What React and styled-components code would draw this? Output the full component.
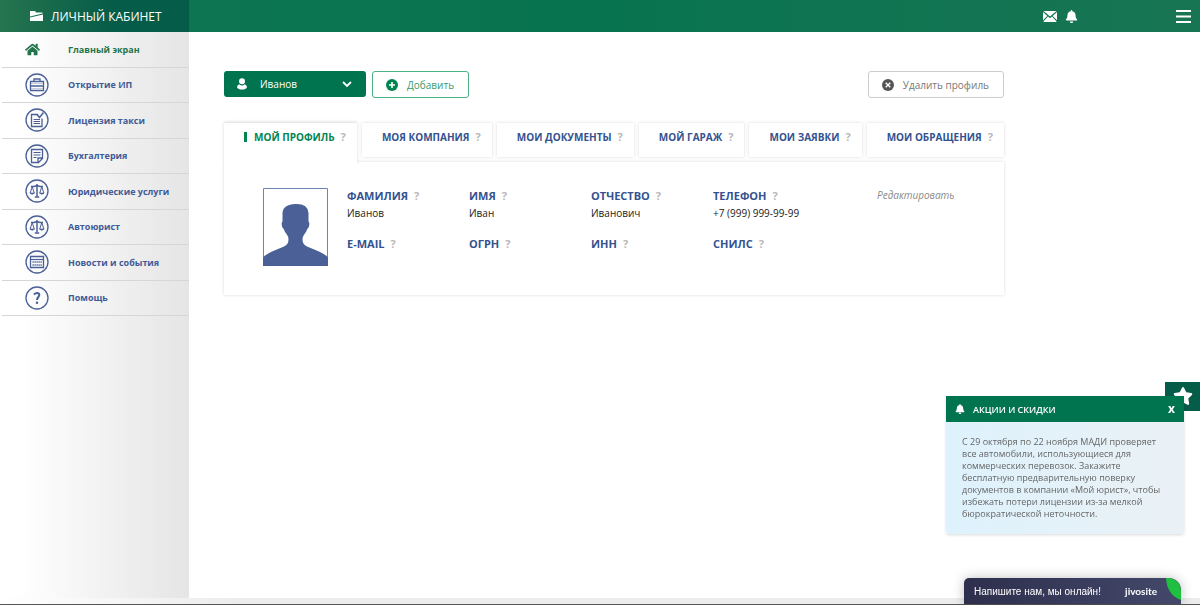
import React, { useState } from "react";
import styled, { createGlobalStyle } from "styled-components";
import { FaHome, FaStar, FaBell } from "react-icons/fa";

function App() {
  const [activeTab, setActiveTab] = useState(1);
  const [noticeOpen, setNoticeOpen] = useState(true);

  return (
    <Page>
      <GlobalStyle />
      <Header>
        <Brand href="#">
          <FolderIcon />
          ЛИЧНЫЙ КАБИНЕТ
        </Brand>
        <HeaderActions>
          <IconButton aria-label="Сообщения">
            <MailIcon />
          </IconButton>
          <IconButton aria-label="Уведомления">
            <FaBell size={13} />
          </IconButton>
        </HeaderActions>
        <IconButton aria-label="Меню">
          <MenuIcon />
        </IconButton>
      </Header>
      <Body>
        <Sidebar>
          <MenuList>
            {MENU_ITEMS.map(item => (
              <MenuItem key={item.id}>
                <MenuLink href="#" $active={item.id === 1}>
                  <MenuIconCell>{item.icon}</MenuIconCell>
                  {item.text}
                </MenuLink>
              </MenuItem>
            ))}
          </MenuList>
        </Sidebar>
        <Main>
          <Content>
            <Toolbar>
              <ProfileSelect>
                <UserIcon />
                <select aria-label="Профиль">
                  <option>Иванов</option>
                </select>
                <ChevronIcon />
              </ProfileSelect>
              <OutlineButton $color="#3a9a6c" $border="#4bb285">
                <AddIcon />
                Добавить
              </OutlineButton>
              <Spacer />
              <OutlineButton $color="#777777" $border="#cccccc">
                <RemoveIcon />
                Удалить профиль
              </OutlineButton>
            </Toolbar>
            <Tabs>
              {TABS.map(tab => (
                <Tab
                  key={tab.id}
                  $active={tab.id === activeTab}
                  onClick={() => setActiveTab(tab.id)}
                >
                  {tab.text}
                  <Hint>?</Hint>
                </Tab>
              ))}
            </Tabs>
            <ProfileCard>
              <Avatar />
              <FieldList>
                {FIELDS.map(field => (
                  <Field key={field.id}>
                    <FieldName>
                      {field.name}
                      <Hint>?</Hint>
                    </FieldName>
                    <FieldValue>{field.value}</FieldValue>
                  </Field>
                ))}
              </FieldList>
              <EditLink href="#">Редактировать</EditLink>
            </ProfileCard>
          </Content>
        </Main>
      </Body>
      <BottomStrip />
      <StarButton aria-label="Акции" onClick={() => setNoticeOpen(true)}>
        <FaStar size={20} />
      </StarButton>
      {noticeOpen && (
        <Notice>
          <NoticeHeader>
            <FaBell size={10} />
            <NoticeTitle>АКЦИИ И СКИДКИ</NoticeTitle>
            <CloseButton onClick={() => setNoticeOpen(false)}>x</CloseButton>
          </NoticeHeader>
          <NoticeText>
            С 29 октября по 22 ноября МАДИ проверяет все автомобили,
            использующиеся для коммерческих перевозок. Закажите бесплатную
            предварительную поверку документов в компании «Мой юрист», чтобы
            избежать потери лицензии из-за мелкой бюрократической неточности.
          </NoticeText>
        </Notice>
      )}
      <Chat>
        Напишите нам, мы онлайн!
        <ChatLogo>jivosite</ChatLogo>
        <LeafIcon />
      </Chat>
    </Page>
  );
}

const FolderIcon = () => (
  <svg width="13" height="12" viewBox="0 0 13 12" fill="#fff">
    <path d="M0 1h5l1 1.500h6.500v1L0 6.500z" />
    <path d="M0 7.500l13-3V11H0z" />
  </svg>
);

const MailIcon = () => (
  <svg width="14" height="11" viewBox="0 0 14 11" fill="#fff">
    <path d="M.5 0h13L7 5.500z" />
    <path d="M0 1l4.300 3.900L0 9.300zM14 1L9.700 4.900 14 9.300z" />
    <path d="M5 5.600l2 1.600 2-1.600L13.600 10.500a1 1 0 0 1-.6.500H1a1 1 0 0 1-.6-.5z" />
  </svg>
);

const MenuIcon = () => (
  <svg width="15" height="13" viewBox="0 0 15 13" fill="#fff">
    <path d="M0 0h15v2H0zM0 5.500h15v2H0zM0 11h15v2H0z" />
  </svg>
);

const UserIcon = () => (
  <svg width="10" height="12" viewBox="0 0 10 12" fill="#fff">
    <circle cx="5" cy="3.200" r="3" />
    <path d="M2.200 6.200Q5 8.600 7.800 6.200 10 7 10 9.200 9 11.500 5 11.500T0 9.200Q0 7 2.200 6.200z" />
  </svg>
);

const ChevronIcon = () => (
  <svg width="10" height="7" viewBox="0 0 10 7" fill="none">
    <path d="M1 1l4 4 4-4" stroke="#fff" strokeWidth="1.800" />
  </svg>
);

const AddIcon = () => (
  <svg width="12" height="12" viewBox="0 0 12 12">
    <circle cx="6" cy="6" r="6" fill="#008552" />
    <path d="M6 3v6M3 6h6" stroke="#fff" strokeWidth="1.600" />
  </svg>
);

const RemoveIcon = () => (
  <svg width="12" height="12" viewBox="0 0 12 12">
    <circle cx="6" cy="6" r="6" fill="#555" />
    <path d="M3.700 3.700l4.600 4.600M8.300 3.700L3.700 8.300" stroke="#fff" strokeWidth="1.400" />
  </svg>
);

const CircleIcon = ({ children }) => (
  <svg width="24" height="24" viewBox="0 0 24 24" fill="none" stroke="#4a6096">
    <circle cx="12" cy="12" r="11" strokeWidth="1.300" />
    {children}
  </svg>
);

const CaseIcon = () => (
  <CircleIcon>
    <path d="M5.500 8.500h13v9h-13zM9 8.500v-2.500h6v2.500M5.500 13h13" strokeWidth="1.300" />
    <path d="M6 10.500h12M6 15.500h12" strokeWidth=".3" />
  </CircleIcon>
);

const LicenceIcon = () => (
  <CircleIcon>
    <path d="M13 6.500H6.500v12h10.500v-8" strokeWidth="1.300" />
    <path d="M12 6.500l2.500 3L18.500 4.500" strokeWidth="1.500" />
    <path d="M8.500 11.500h6.500M8.500 13.500h6.500M8.500 15.500h6.500" />
  </CircleIcon>
);

const ReportIcon = () => (
  <CircleIcon>
    <path d="M6.500 5.500h11v9l-4 4h-7zM13 18v-4h4.500" strokeWidth="1.300" />
    <path d="M8.500 8.500h7M8.500 11h7M8.500 13.500h3" strokeWidth="1.200" />
  </CircleIcon>
);

const ScalesIcon = () => (
  <CircleIcon>
    <path d="M12 5v12.500M6 7.500h3l3-1 3 1h3" strokeWidth="1.500" />
    <path d="M9.800 18h4.400" strokeWidth="1.500" />
    <path d="M7.200 7.500L5.200 14M7.200 7.500l2 6.500M16.800 7.500l-2 6.500M16.800 7.500l2 6.500" />
    <path d="M4.800 14h4.800q-2.400 2.600-4.800 0zM14.400 14h4.800q-2.400 2.600-4.800 0z" fill="#4a6096" strokeWidth=".6" />
  </CircleIcon>
);

const CalendarIcon = () => (
  <CircleIcon>
    <path d="M5.500 6.500h13v11h-13z" strokeWidth="1.300" />
    <path d="M5.500 9.500h13" strokeWidth="1.200" />
    <path d="M7.500 12h9.500M7.500 15h9.500" strokeWidth="1.300" strokeDasharray="1.300 .7" />
  </CircleIcon>
);

const HelpIcon = () => (
  <CircleIcon>
    <path d="M8.900 8.400Q12 5.900 14 7.700C15.800 10 12 10.800 12 14" strokeWidth="2" />
    <circle cx="12" cy="16.700" r=".7" fill="#4a6096" strokeWidth="1.100" />
  </CircleIcon>
);

const Avatar = () => (
  <svg width="65" height="78" viewBox="0 0 65 78">
    <path d="M.5.500h64v77H.5z" fill="#fff" stroke="#6f84b6" />
    <path
      d="M0 78V69.500Q2 67 9 63.500L21 58.500Q25.500 56.500 25.500 51.500 25.500 48.500 23.500 46 21.500 43.500 20.700 41 18.700 40 18.700 36.500 18.500 34 19.500 33.500V25Q20 16.500 32.500 16T45.500 25v8.500Q46.500 34 46.300 36.500 46.300 40 44.300 41 43.500 43.500 41.500 46 39.500 48.500 39.500 51.500 39.500 56.500 44 58.500L56 63.500Q63 67 65 69.500V78z"
      fill="#4a6096"
    />
  </svg>
);

const LeafIcon = () => (
  <svg width="15" height="22" viewBox="0 0 15 22">
    <path d="M0 0H4Q15 3 15 13V22Q1 17 0 0z" fill="#1fbf3f" />
  </svg>
);

const MENU_ITEMS = [
  { id: 1, text: "Главный экран", icon: <FaHome size={15} /> },
  { id: 2, text: "Открытие ИП", icon: <CaseIcon /> },
  { id: 3, text: "Лицензия такси", icon: <LicenceIcon /> },
  { id: 4, text: "Бухгалтерия", icon: <ReportIcon /> },
  { id: 5, text: "Юридические услуги", icon: <ScalesIcon /> },
  { id: 6, text: "Автоюрист", icon: <ScalesIcon /> },
  { id: 7, text: "Новости и события", icon: <CalendarIcon /> },
  { id: 8, text: "Помощь", icon: <HelpIcon /> },
];

const TABS = [
  { id: 1, text: "МОЙ ПРОФИЛЬ" },
  { id: 2, text: "МОЯ КОМПАНИЯ" },
  { id: 3, text: "МОИ ДОКУМЕНТЫ" },
  { id: 4, text: "МОЙ ГАРАЖ" },
  { id: 5, text: "МОИ ЗАЯВКИ" },
  { id: 6, text: "МОИ ОБРАЩЕНИЯ" },
];

const FIELDS = [
  { id: 1, name: "ФАМИЛИЯ", value: "Иванов" },
  { id: 2, name: "ИМЯ", value: "Иван" },
  { id: 3, name: "ОТЧЕСТВО", value: "Иванович" },
  { id: 4, name: "ТЕЛЕФОН", value: "+7 (999) 999-99-99" },
  { id: 5, name: "E-MAIL", value: "" },
  { id: 6, name: "ОГРН", value: "" },
  { id: 7, name: "ИНН", value: "" },
  { id: 8, name: "СНИЛС", value: "" },
];

const GlobalStyle = createGlobalStyle`
  * {
    box-sizing: border-box;
  }

  body {
    margin: 0;
    background: #ffffff;
    font-family: "Open Sans", "Noto Sans", sans-serif;
  }

  button, select {
    font-family: inherit;
    cursor: pointer;
  }

  svg {
    display: block;
    flex-shrink: 0;
  }
`;

const Page = styled.div`
  display: flex;
  flex-direction: column;
  min-height: 100vh;
`;

const Header = styled.header`
  display: flex;
  align-items: center;
  height: 32px;
  padding-right: 9px;
  background: linear-gradient(90deg, #0f7552, #08734f 50%, #187554);
`;

const Brand = styled.a`
  display: flex;
  align-items: center;
  gap: 8px;
  width: 189px;
  height: 100%;
  padding-left: 30px;
  background: linear-gradient(90deg, #27754f, #055c48 60%);
  color: #ffffff;
  font-size: 12px;
  text-decoration: none;
`;

const HeaderActions = styled.div`
  display: flex;
  align-items: center;
  gap: 8px;
  margin-left: auto;
  margin-right: 98px;
`;

const IconButton = styled.button`
  display: flex;
  padding: 0;
  border: 0;
  background: none;
  color: #ffffff;
`;

const Body = styled.div`
  display: flex;
  flex: 1;
`;

const Sidebar = styled.nav`
  width: 189px;
  background: linear-gradient(90deg, #ffffff 10%, #e5e5e5);
`;

const MenuList = styled.ul`
  display: grid;
  grid-auto-rows: 1fr;
  height: 284px;
  margin: 0;
  padding: 0 0 0 2px;
  list-style: none;
`;

const MenuItem = styled.li`
  border-bottom: 1px solid #d6d6d6;
`;

const MenuLink = styled.a`
  display: flex;
  align-items: center;
  height: 100%;
  padding-left: 23px;
  color: ${props => (props.$active ? "#23744c" : "#3f5a96")};
  font-size: 9px;
  font-weight: bold;
  text-decoration: none;
`;

const MenuIconCell = styled.span`
  display: flex;
  width: 43px;
`;

const Main = styled.main`
  flex: 1;
  padding: 39px 35px;
`;

const Content = styled.div`
  max-width: 780px;
`;

const Toolbar = styled.div`
  display: flex;
  align-items: flex-start;
  gap: 6px;
  margin-bottom: 25px;
`;

const Spacer = styled.div`
  flex: 1;
`;

const ProfileSelect = styled.div`
  display: flex;
  align-items: center;
  gap: 13px;
  width: 142px;
  height: 26px;
  padding: 0 14px 0 13px;
  border-radius: 3px;
  background: #00734f;

  select {
    flex: 1;
    min-width: 0;
    padding: 0;
    border: 0;
    appearance: none;
    background: #00734f;
    color: #ffffff;
    font-size: 10px;
  }
`;

const OutlineButton = styled.button`
  display: flex;
  align-items: center;
  gap: 9px;
  height: 27px;
  padding: 0 14px 0 13px;
  border: 1px solid ${props => props.$border};
  border-radius: 3px;
  background: #ffffff;
  color: ${props => props.$color};
  font-size: 10px;
`;

const Tabs = styled.div`
  display: flex;
  align-items: flex-start;
  gap: 5px;
`;

const Tab = styled.button`
  position: relative;
  flex: 1 0 auto;
  height: ${props => (props.$active ? 41 : 34)}px;
  padding: 0 7px ${props => (props.$active ? 15 : 8)}px 20px;
  border: 0;
  background: #ffffff;
  box-shadow: ${props =>
    props.$active ? "0 -1px 3px rgba(0, 0, 0, 0.15)" : "0 0 3px rgba(0, 0, 0, 0.15)"};
  clip-path: ${props => (props.$active ? "inset(-4px -4px 0 -4px)" : "none")};
  color: ${props => (props.$active ? "#008552" : "#34528f")};
  font-size: 10px;
  font-weight: bold;
  text-align: left;
  white-space: nowrap;
  z-index: ${props => (props.$active ? 1 : 0)};

  &::before {
    content: "";
    display: ${props => (props.$active ? "inline-block" : "none")};
    width: 3px;
    height: 10px;
    margin-right: 7px;
    background: #008552;
    vertical-align: -1px;
  }
`;

const Hint = styled.span`
  margin-left: 6px;
  color: #b8b8b8;
  font-size: 11px;
`;

const ProfileCard = styled.section`
  display: flex;
  align-items: flex-start;
  margin-top: -2px;
  padding: 26px 39px 25px;
  background: #ffffff;
  box-shadow: 0 0 3px rgba(0, 0, 0, 0.15);
`;

const FieldList = styled.dl`
  display: grid;
  grid-template-columns: repeat(4, 122px);
  row-gap: 14px;
  margin: 0 42px 0 19px;
`;

const Field = styled.div`
  min-height: 34px;
`;

const FieldName = styled.dt`
  color: #34528f;
  font-size: 11px;
  font-weight: bold;
  line-height: 16px;
`;

const FieldValue = styled.dd`
  margin: 0;
  color: #222222;
  font-size: 10px;
  line-height: 18px;
`;

const EditLink = styled.a`
  color: #8a8a8a;
  font-size: 10px;
  font-style: italic;
  line-height: 14px;
  text-decoration: none;
`;

const BottomStrip = styled.div`
  height: 7px;
  border-bottom: 1px solid #555555;
  background: linear-gradient(90deg, #ffffff, #ececec 20%);
`;

const StarButton = styled.button`
  position: fixed;
  right: 0;
  bottom: 194px;
  display: flex;
  justify-content: center;
  width: 35px;
  height: 29px;
  padding: 4px 0 0;
  border: 0;
  background: #055c48;
  color: #ffffff;
`;

const Notice = styled.aside`
  position: fixed;
  right: 16px;
  bottom: 71px;
  width: 238px;
  border-radius: 3px;
  background: linear-gradient(90deg, #def2fd, #eaf1f5);
  box-shadow: 0 1px 3px rgba(0, 0, 0, 0.15);
`;

const NoticeHeader = styled.header`
  display: flex;
  align-items: center;
  gap: 8px;
  height: 26px;
  padding: 0 9px;
  background: #00734f;
  color: #ffffff;
`;

const NoticeTitle = styled.span`
  flex: 1;
  font-size: 9px;
  font-weight: 600;
`;

const CloseButton = styled.button`
  padding: 0;
  border: 0;
  background: none;
  color: #ffffff;
  font-size: 12px;
  font-weight: bold;
  line-height: 12px;
`;

const NoticeText = styled.p`
  margin: 0;
  padding: 14px 16px;
  color: #666666;
  font-size: 9px;
  line-height: 12px;
`;

const Chat = styled.aside`
  position: fixed;
  right: 19px;
  bottom: 1px;
  display: flex;
  align-items: center;
  width: 217px;
  height: 26px;
  padding-left: 10px;
  border-radius: 5px 12px 0 0;
  background: linear-gradient(90deg, #2e2f4d, #43486a);
  box-shadow: 0 0 12px rgba(0, 0, 0, 0.25);
  color: #ffffff;
  font-family: "Liberation Sans", Arial, sans-serif;
  font-size: 10px;

  svg {
    align-self: flex-start;
  }
`;

const ChatLogo = styled.span`
  margin-left: auto;
  margin-right: 9px;
  font-family: Lato, sans-serif;
  font-size: 10px;
  font-weight: bold;
`;

export default App;
